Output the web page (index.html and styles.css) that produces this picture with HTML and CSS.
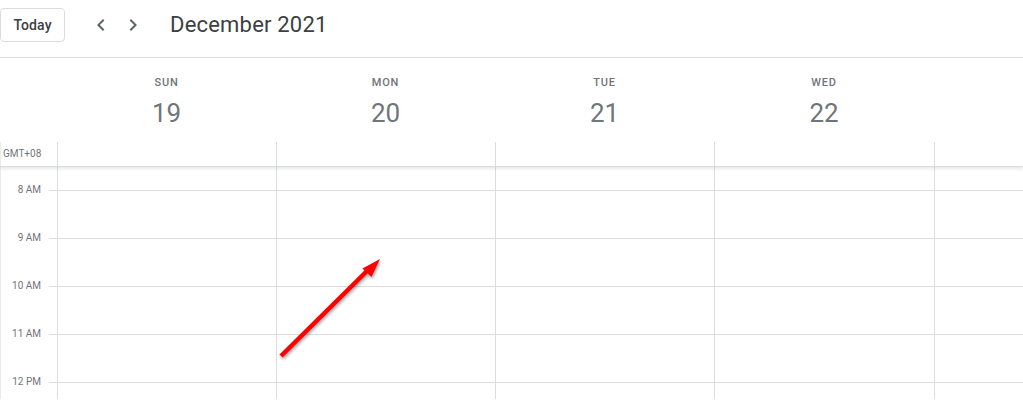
FILE: index.html
```html
<!DOCTYPE html>
<html>
<head>
<meta charset="utf-8">
<link rel="stylesheet" href="styles.css">
</head>
<body>
<header class="topbar">
  <button class="today">Today</button>
  <div class="navs">
    <span class="nav"><svg viewBox="0 0 24 24" width="24" height="24"><path d="M15.41 7.41L14 6l-6 6 6 6 1.41-1.41L10.83 12z"/></svg></span>
    <span class="nav"><svg viewBox="0 0 24 24" width="24" height="24"><path d="M10 6L8.59 7.41 13.17 12l-4.58 4.59L10 18l6-6z"/></svg></span>
  </div>
  <h1 class="title">December 2021</h1>
</header>

<section class="cal">
  <div class="row days">
    <div class="gutter"></div>
    <div class="dayhead"><div class="dname">Sun</div><div class="dnum">19</div></div>
    <div class="dayhead"><div class="dname">Mon</div><div class="dnum">20</div></div>
    <div class="dayhead"><div class="dname">Tue</div><div class="dnum">21</div></div>
    <div class="dayhead"><div class="dname">Wed</div><div class="dnum">22</div></div>
    <div class="dayhead"></div>
  </div>

  <div class="row allday">
    <div class="gutter tz">GMT+08</div>
    <div class="cell"></div><div class="cell"></div><div class="cell"></div><div class="cell"></div><div class="cell"></div>
  </div>

  <div class="body">
    <div class="row hour first">
      <div class="gutter"></div>
      <div class="cell"></div><div class="cell"></div><div class="cell"></div><div class="cell"></div><div class="cell"></div>
    </div>
    <div class="row hour">
      <div class="gutter"><span class="lbl">8 AM</span><span class="tick"></span></div>
      <div class="cell"></div><div class="cell"></div><div class="cell"></div><div class="cell"></div><div class="cell"></div>
    </div>
    <div class="row hour">
      <div class="gutter"><span class="lbl">9 AM</span><span class="tick"></span></div>
      <div class="cell"></div><div class="cell"></div><div class="cell"></div><div class="cell"></div><div class="cell"></div>
    </div>
    <div class="row hour">
      <div class="gutter"><span class="lbl">10 AM</span><span class="tick"></span></div>
      <div class="cell"></div><div class="cell"></div><div class="cell"></div><div class="cell"></div><div class="cell"></div>
    </div>
    <div class="row hour">
      <div class="gutter"><span class="lbl">11 AM</span><span class="tick"></span></div>
      <div class="cell"></div><div class="cell"></div><div class="cell"></div><div class="cell"></div><div class="cell"></div>
    </div>
    <div class="row hour last">
      <div class="gutter"><span class="lbl">12 PM</span><span class="tick"></span></div>
      <div class="cell"></div><div class="cell"></div><div class="cell"></div><div class="cell"></div><div class="cell"></div>
    </div>
  </div>
</section>

<svg class="arrow" width="1023" height="400" viewBox="0 0 1023 400">
  <line x1="281" y1="356" x2="368" y2="270" stroke="#ff0000" stroke-width="4.5" stroke-linecap="butt"/>
  <polygon points="380,259 371.5,277 362.5,268.5" fill="#ff0000"/>
</svg>
</body>
</html>
```

FILE: styles.css
```css
html, body {
  margin: 0;
  padding: 0;
  background: #fff;
  overflow: hidden;
}
body {
  width: 1023px;
  height: 400px;
  font-family: Roboto, "Liberation Sans", Arial, sans-serif;
  color: #3c4043;
  position: relative;
}
.topbar {
  display: flex;
  align-items: center;
  height: 34px;
  padding: 8px 0 15px 0;
  border-bottom: 1px solid #dadce0;
}
.today {
  box-sizing: border-box;
  width: 65px;
  height: 34px;
  margin: 0;
  padding: 0;
  background: #fff;
  border: 1px solid #dadce0;
  border-radius: 4px;
  font-family: Roboto, "Liberation Sans", Arial, sans-serif;
  font-size: 14px;
  font-weight: 500;
  color: #3c4043;
  letter-spacing: 0.1px;
}
.navs {
  display: flex;
  margin-left: 24px;
  gap: 8px;
}
.nav {
  display: flex;
  width: 24px;
  height: 24px;
}
.nav svg {
  fill: #5f6368;
}
.title {
  margin: 0 0 0 25px;
  font-size: 22px;
  font-weight: 400;
  color: #3c4043;
  letter-spacing: 0.2px;
  line-height: 28px;
}

.cal {
  display: flex;
  flex-direction: column;
}
.row {
  display: grid;
  grid-template-columns: 57px 219px 219px 219px 220px 1fr;
}
.days {
  height: 84px;
}
.dayhead {
  text-align: center;
  padding-top: 17px;
}
.dname {
  font-size: 11px;
  font-weight: 500;
  letter-spacing: 0.8px;
  line-height: 16px;
  text-transform: uppercase;
  color: #70757a;
}
.dnum {
  font-size: 26px;
  line-height: 44px;
  color: #70757a;
}
.allday {
  height: 24px;
  border-bottom: 1px solid #dadce0;
  box-shadow: 0 2px 3px rgba(60, 64, 67, 0.12), inset 1px 0 0 #ebebeb;
  position: relative;
}
.tz {
  font-size: 10px;
  color: #70757a;
  padding-left: 3px;
  line-height: 24px;
}
.cell {
  border-left: 1px solid #dadce0;
}
.body {
  box-shadow: inset 1px 0 0 #ebebeb;
}
.hour {
  height: 48px;
}
.hour .cell {
  border-top: 1px solid #dadce0;
}
.hour.first {
  height: 23px;
}
.hour.first .cell {
  border-top: none;
}
.hour.last {
  height: 17px;
}
.hour .gutter {
  display: flex;
  justify-content: flex-end;
  align-items: flex-start;
}
.lbl {
  font-size: 10px;
  color: #70757a;
  line-height: 12px;
  margin-top: -6px;
  padding-right: 8px;
}
.tick {
  width: 8px;
  border-top: 1px solid #dadce0;
}
.arrow {
  position: absolute;
  left: 0;
  top: 0;
  pointer-events: none;
  filter: drop-shadow(1px 2px 1.5px rgba(0, 0, 0, 0.35));
}
```
